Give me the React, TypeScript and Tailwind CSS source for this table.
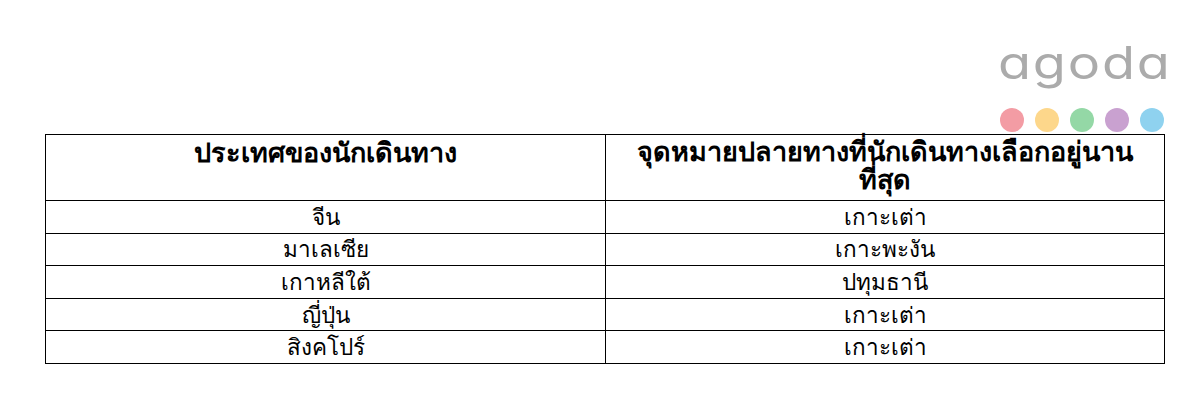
const rows = [
  ['จีน', 'เกาะเต่า'],
  ['มาเลเซีย', 'เกาะพะงัน'],
  ['เกาหลีใต้', 'ปทุมธานี'],
  ['ญี่ปุ่น', 'เกาะเต่า'],
  ['สิงคโปร์', 'เกาะเต่า'],
]

const dots = ['#f39ca4', '#fdd78b', '#94d8a6', '#c9a1d0', '#8fd2ef']

export default function App() {
  return (
    <div className="h-[400px] w-[1200px] bg-white font-['Tahoma','DejaVu_Sans','Noto_Sans',sans-serif] text-black">
      <div className="flex justify-end pr-[35px] pt-[33px]">
        <div className="flex w-[167px] flex-col items-center">
          <div className="h-[60px] origin-left scale-x-[1.2] self-start font-['Inter',sans-serif] text-[45px] font-normal leading-[60px] tracking-[1.5px] text-[#ababab] [font-feature-settings:'cv11']">
            agoda
          </div>
          <div className="mt-[15px] flex gap-[11px]">
            {dots.map((c) => (
              <span key={c} className="h-[24px] w-[24px] rounded-full" style={{ backgroundColor: c }} />
            ))}
          </div>
        </div>
      </div>
      <table className="mx-[45px] mt-[2px] w-[1120px] border-collapse leading-[30px]">
        <thead>
          <tr className="h-[66px]">
            <th className="w-[560px] border border-black px-2 pt-[3px] align-top text-[27px] leading-[30px] font-bold">ประเทศของนักเดินทาง</th>
            <th className="border border-black px-2 pt-[3px] align-top text-[27px] leading-[28px] font-bold">
              จุดหมายปลายทางที่นักเดินทางเลือกอยู่นาน
              <br />
              ที่สุด
            </th>
          </tr>
        </thead>
        <tbody className="text-[22.5px]">
          {rows.map(([a, b], i) => (
            <tr key={i} className="h-[32.6px]">
              <td className="border border-black p-0 text-center leading-[30px]">{a}</td>
              <td className="border border-black p-0 text-center leading-[30px]">{b}</td>
            </tr>
          ))}
        </tbody>
      </table>
    </div>
  )
}
